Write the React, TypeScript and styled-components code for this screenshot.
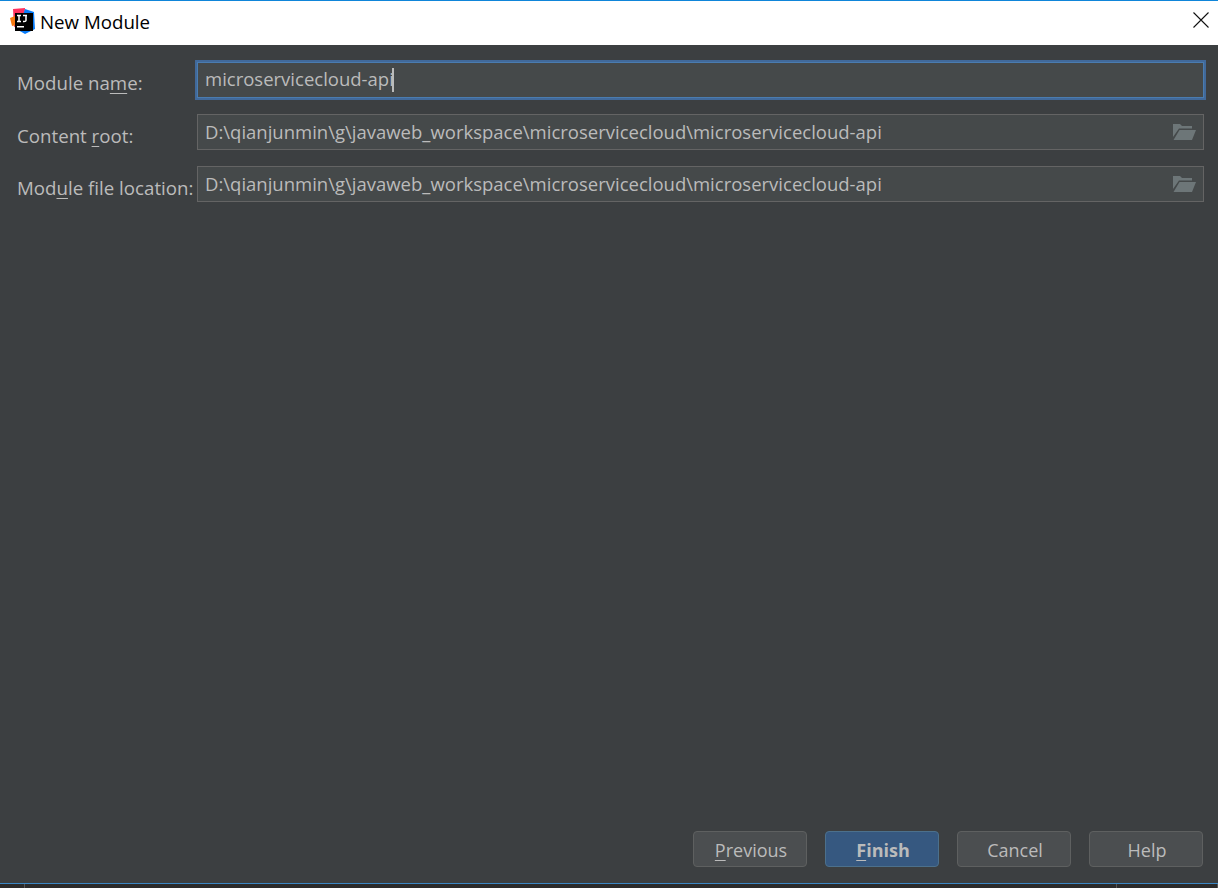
import styled, { createGlobalStyle } from 'styled-components';

const GlobalStyle = createGlobalStyle`
  html, body {
    margin: 0;
    padding: 0;
    background: #3c3f41;
  }
  * {
    box-sizing: border-box;
  }
`;

const Window = styled.div`
  width: 1218px;
  height: 888px;
  display: flex;
  flex-direction: column;
  overflow: hidden;
  font-family: "Open Sans", "Noto Sans", sans-serif;
`;

const TitleBar = styled.div`
  height: 45px;
  flex: none;
  display: flex;
  align-items: center;
  padding: 0 8px 0 10px;
  background: #fff;
  border-top: 1px solid #0f85d9;
  svg:first-child {
    margin-top: -3px;
  }
`;

const Title = styled.span`
  margin-left: 5px;
  margin-top: -4px;
  font-size: 18.7px;
  color: #000;
`;

const CloseButton = styled.div`
  margin-left: auto;
  width: 18px;
  height: 18px;
  display: flex;
`;

const Body = styled.div`
  flex: 1;
  display: flex;
  flex-direction: column;
  background: #3c3f41;
  padding: 17px 14px 0 17px;
`;

const Form = styled.div`
  display: flex;
  flex-direction: column;
  gap: 16px;
`;

const Row = styled.div`
  display: grid;
  grid-template-columns: 180px 1fr;
  align-items: center;
  height: 36px;
  &:first-child label {
    padding-top: 5px;
  }
`;

const Label = styled.label`
  font-size: 18.7px;
  color: #bbbbbb;
  white-space: nowrap;
  padding-top: 7px;
`;

const Mnemonic = styled.span`
  text-decoration: underline;
  text-underline-offset: 3px;
`;

const Field = styled.div<{ $focused?: boolean }>`
  height: 36px;
  display: flex;
  align-items: center;
  justify-content: space-between;
  padding: 0 7px 1px 7px;
  background: #45494a;
  color: #bbbbbb;
  font-size: 18.5px;
  border: 1px solid #646464;
  ${(p) =>
    p.$focused &&
    `
    border-color: #4a7cb0;
    outline: 2px solid #41699a;
    padding-bottom: 3px;
  `}
`;

const Value = styled.span`
  white-space: nowrap;
`;

const Caret = styled.span`
  display: inline-block;
  width: 2px;
  height: 24px;
  margin-left: -2px;
  background: #bbbbbb;
  vertical-align: -6px;
`;

const Footer = styled.div`
  margin-top: auto;
  display: flex;
  justify-content: flex-end;
  gap: 18px;
  padding: 0 1px 16px 0;
`;

const Button = styled.button<{ $primary?: boolean }>`
  width: 114px;
  height: 36px;
  padding: 2px 0 0 2px;
  border-radius: 4px;
  font-family: inherit;
  font-size: 18px;
  font-weight: ${(p) => (p.$primary ? 700 : 400)};
  color: #bbbbbb;
  background: ${(p) => (p.$primary ? '#365880' : '#4b4e50')};
  border: 1px solid ${(p) => (p.$primary ? '#4c708c' : '#5e6060')};
`;

const BottomStrip = styled.div`
  height: 5px;
  flex: none;
  display: flex;
  background: #2b2b2b;
  border-top: 1px solid #3b87c4;
`;

const StripCell = styled.div<{ $width?: number }>`
  width: ${(p) => (p.$width ? `${p.$width}px` : 'auto')};
  flex: ${(p) => (p.$width ? 'none' : '1')};
  border-right: 1px solid #555;
`;

const AppLogo = () => (
  <svg width="25" height="27" viewBox="0 0 25 27">
    <path d="M3 1 L15 0 L14 14 L4 19 Z" fill="#fe315d" />
    <path d="M0 10 L5 8 L6 17 L2 18 Z" fill="#f97a12" />
    <path d="M15 1 L24 4 L25 21 L15 26 L8 22 Z" fill="#087cfa" />
    <rect x="5" y="5" width="18" height="18" fill="#000" />
    <path d="M7 7.5 H11 M9 7.5 V13.5 M7 13.5 H11" stroke="#fff" strokeWidth="1.5" fill="none" />
    <path d="M13 7.5 H17 M16 7.5 V12.5 Q16 13.5 14 13.5 H13" stroke="#fff" strokeWidth="1.5" fill="none" />
    <rect x="7" y="18" width="7" height="1.5" fill="#fff" />
  </svg>
);

const CloseIcon = () => (
  <svg width="18" height="18" viewBox="0 0 18 18">
    <path d="M1.5 1.5 L16.5 16.5 M16.5 1.5 L1.5 16.5" stroke="#111" strokeWidth="1.1" fill="none" />
  </svg>
);

const FolderIcon = () => (
  <svg width="24" height="18" viewBox="0 0 24 18">
    <path d="M1 1 H8 L10 3 H20 V5.5 H7 L1 14 Z" fill="#6d7678" />
    <path d="M7.5 7 H24 L20 17 H1.5 Z" fill="#6d7678" />
  </svg>
);

const path = 'D:\\qianjunmin\\g\\javaweb_workspace\\microservicecloud\\microservicecloud-api';

export default function App() {
  return (
    <>
      <GlobalStyle />
      <Window>
        <TitleBar>
          <AppLogo />
          <Title>New Module</Title>
          <CloseButton>
            <CloseIcon />
          </CloseButton>
        </TitleBar>
        <Body>
          <Form>
            <Row>
              <Label>
                Module na<Mnemonic>m</Mnemonic>e:
              </Label>
              <Field $focused>
                <Value>
                  microservicecloud-api
                  <Caret />
                </Value>
              </Field>
            </Row>
            <Row>
              <Label>
                Content <Mnemonic>r</Mnemonic>oot:
              </Label>
              <Field>
                <Value>{path}</Value>
                <FolderIcon />
              </Field>
            </Row>
            <Row>
              <Label>
                Mod<Mnemonic>u</Mnemonic>le file location:
              </Label>
              <Field>
                <Value>{path}</Value>
                <FolderIcon />
              </Field>
            </Row>
          </Form>
          <Footer>
            <Button>
              <Mnemonic>P</Mnemonic>revious
            </Button>
            <Button $primary>
              <Mnemonic>F</Mnemonic>inish
            </Button>
            <Button>Cancel</Button>
            <Button>Help</Button>
          </Footer>
        </Body>
        <BottomStrip>
          <StripCell $width={25} />
          <StripCell />
          <StripCell $width={101} />
        </BottomStrip>
      </Window>
    </>
  );
}
